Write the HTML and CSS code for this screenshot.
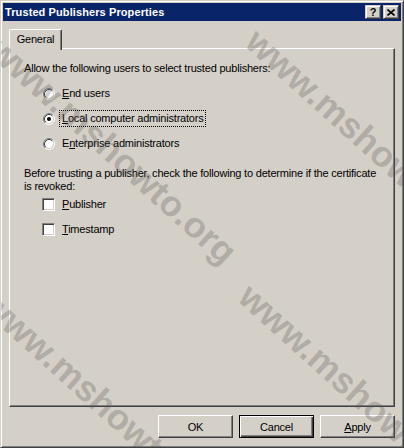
FILE: index.html
```html
<!DOCTYPE html>
<html>
<head lang="en">
    <meta charset="UTF-8">
    <title>Trusted Publishers Properties</title>
    <link rel="stylesheet" href="styles.css">
</head>
<body>
<div class="window">
    <div class="titlebar">
        <span class="title">Trusted Publishers Properties</span>
        <span class="cap-btn help">?</span>
        <span class="cap-btn close">
            <svg width="8" height="7" viewBox="0 0 8 7"><path d="M0.5 0.5 L7.5 6.5 M7.5 0.5 L0.5 6.5" stroke="#000" stroke-width="1.6" fill="none"/></svg>
        </span>
    </div>
    <div class="main">
        <div class="tabs">
            <div class="tab">General</div>
        </div>
        <div class="panel">
            <p class="label">Allow the following users to select trusted publishers:</p>
            <div class="choices">
                <div class="choice">
                    <svg class="radio" width="12" height="12" viewBox="0 0 12 12">
                        <circle cx="6" cy="6" r="4.5" fill="#fff"/>
                        <path d="M2.11 9.89 A5.5 5.5 0 0 1 9.89 2.11" stroke="#808080" fill="none"/>
                        <path d="M9.89 2.11 A5.5 5.5 0 0 1 2.11 9.89" stroke="#fff" fill="none"/>
                        <path d="M2.82 9.18 A4.5 4.5 0 0 1 9.18 2.82" stroke="#404040" fill="none"/>
                        <path d="M9.18 2.82 A4.5 4.5 0 0 1 2.82 9.18" stroke="#d4d0c8" fill="none"/>
                    </svg>
                    <span class="choice-text"><u>E</u>nd users</span>
                </div>
                <div class="choice">
                    <svg class="radio" width="12" height="12" viewBox="0 0 12 12">
                        <circle cx="6" cy="6" r="4.5" fill="#fff"/>
                        <path d="M2.11 9.89 A5.5 5.5 0 0 1 9.89 2.11" stroke="#808080" fill="none"/>
                        <path d="M9.89 2.11 A5.5 5.5 0 0 1 2.11 9.89" stroke="#fff" fill="none"/>
                        <path d="M2.82 9.18 A4.5 4.5 0 0 1 9.18 2.82" stroke="#404040" fill="none"/>
                        <path d="M9.18 2.82 A4.5 4.5 0 0 1 2.82 9.18" stroke="#d4d0c8" fill="none"/>
                        <circle cx="6" cy="6" r="2" fill="#000"/>
                    </svg>
                    <span class="choice-text focus"><u>L</u>ocal computer administrators</span>
                </div>
                <div class="choice">
                    <svg class="radio" width="12" height="12" viewBox="0 0 12 12">
                        <circle cx="6" cy="6" r="4.5" fill="#fff"/>
                        <path d="M2.11 9.89 A5.5 5.5 0 0 1 9.89 2.11" stroke="#808080" fill="none"/>
                        <path d="M9.89 2.11 A5.5 5.5 0 0 1 2.11 9.89" stroke="#fff" fill="none"/>
                        <path d="M2.82 9.18 A4.5 4.5 0 0 1 9.18 2.82" stroke="#404040" fill="none"/>
                        <path d="M9.18 2.82 A4.5 4.5 0 0 1 2.82 9.18" stroke="#d4d0c8" fill="none"/>
                    </svg>
                    <span class="choice-text">E<u>n</u>terprise administrators</span>
                </div>
            </div>
            <p class="label second">Before trusting a publisher, check the following to determine if the certificate<br>is revoked:</p>
            <div class="choices checks">
                <div class="choice">
                    <span class="checkbox"></span>
                    <span class="choice-text"><u>P</u>ublisher</span>
                </div>
                <div class="choice">
                    <span class="checkbox"></span>
                    <span class="choice-text"><u>T</u>imestamp</span>
                </div>
            </div>
        </div>
        <div class="buttons">
            <button class="btn">OK</button>
            <button class="btn default">Cancel</button>
            <button class="btn"><u>A</u>pply</button>
        </div>
    </div>

    <span class="wm wm_a">www.mshowto.org</span>
    <span class="wm wm_b">www.mshowto.org</span>
    <span class="wm wm_c">www.mshowto.org</span>
    <span class="wm wm_d">www.mshowto.org</span>
</div>
</body>
</html>
```

FILE: styles.css
```css
*{
    margin: 0px;
    padding: 0px;
    box-sizing: border-box;
}
body{
    background: #d4d0c8;
    font-family: "Liberation Sans", Arial, sans-serif;
    font-size: 11px;
    color: #000;
}
.window{
    position: relative;
    overflow: hidden;
    width: 404px;
    height: 448px;
    display: flex;
    flex-direction: column;
    padding: 2px;
    background: #d4d0c8;
    border: 1px solid;
    border-color: #d4d0c8 #404040 #404040 #d4d0c8;
    box-shadow: inset 1px 1px #fff, inset -1px -1px #808080;
}
.titlebar{
    height: 18px;
    display: flex;
    align-items: center;
    padding: 0px 2px 0px 2px;
    background: #0a246a;
    color: #fff;
}
.title{
    flex: 1;
    font-weight: bold;
    font-size: 11px;
    letter-spacing: 0.1px;
}
.cap-btn{
    width: 16px;
    height: 14px;
    display: flex;
    align-items: center;
    justify-content: center;
    background: #d4d0c8;
    color: #000;
    border: 1px solid;
    border-color: #d4d0c8 #404040 #404040 #d4d0c8;
    box-shadow: inset 1px 1px #fff, inset -1px -1px #808080;
    font-weight: bold;
    font-size: 11px;
    line-height: 12px;
}
.help{
    margin-right: 2px;
}
.main{
    flex: 1;
    display: flex;
    flex-direction: column;
    padding: 8px 6px 7px 6px;
}
.tabs{
    display: flex;
    height: 20px;
    position: relative;
    z-index: 1;
    margin-bottom: -1px;
}
.tab{
    width: 53px;
    height: 21px;
    padding-top: 3px;
    text-align: center;
    background: #d4d0c8;
    border: 1px solid;
    border-bottom: none;
    border-color: #fff #404040 #d4d0c8 #fff;
    border-radius: 2px 2px 0px 0px;
    box-shadow: inset -1px 0px #808080;
    letter-spacing: -0.2px;
}
.panel{
    flex: 1;
    padding: 13px 14px 0px 14px;
    border: 1px solid;
    border-color: #fff #404040 #404040 #fff;
    box-shadow: inset -1px -1px #808080;
}
.label{
    line-height: 13px;
    letter-spacing: -0.2px;
}
.choices{
    display: flex;
    flex-direction: column;
    gap: 8px;
    margin: 10px 0px 0px 19px;
}
.choice{
    height: 17px;
    display: flex;
    align-items: center;
    letter-spacing: -0.2px;
}
.radio{
    margin-right: 4px;
}
.choice-text{
    padding: 1px 1px 1px 2px;
    line-height: 13px;
    border: 1px dotted transparent;
}
.choice-text.focus{
    border-color: #000;
}
.label.second{
    margin-top: 15px;
}
.checks{
    margin-top: 3px;
}
.checkbox{
    width: 13px;
    height: 13px;
    margin: 0px 4px 0px -1px;
    background: #fff;
    border: 1px solid;
    border-color: #808080 #fff #fff #808080;
    box-shadow: inset 1px 1px #404040, inset -1px -1px #d4d0c8;
}
.buttons{
    display: flex;
    justify-content: flex-end;
    gap: 6px;
    margin-top: 8px;
}
.btn{
    width: 75px;
    height: 23px;
    font-family: "Liberation Sans", Arial, sans-serif;
    font-size: 11px;
    letter-spacing: -0.2px;
    color: #000;
    background: #d4d0c8;
    border: 1px solid;
    border-color: #fff #404040 #404040 #fff;
    box-shadow: inset -1px -1px #808080;
}
.btn.default{
    border-color: #000;
    box-shadow: inset 1px 1px #fff, inset -1px -1px #404040, inset -2px -2px #808080;
}
.wm{
    position: absolute;
    z-index: 5;
    pointer-events: none;
    white-space: nowrap;
    font-family: "Liberation Sans", Arial, sans-serif;
    font-weight: bold;
    font-size: 36px;
    line-height: 38px;
    color: rgba(90, 86, 80, 0.3);
    transform: rotate(42deg);
    transform-origin: 0px 0px;
}
.wm_a{
    left: 6px;
    top: 29px;
}
.wm_b{
    left: 263px;
    top: 21px;
}
.wm_c{
    left: -1px;
    top: 284px;
}
.wm_d{
    left: 256px;
    top: 276px;
}
```
